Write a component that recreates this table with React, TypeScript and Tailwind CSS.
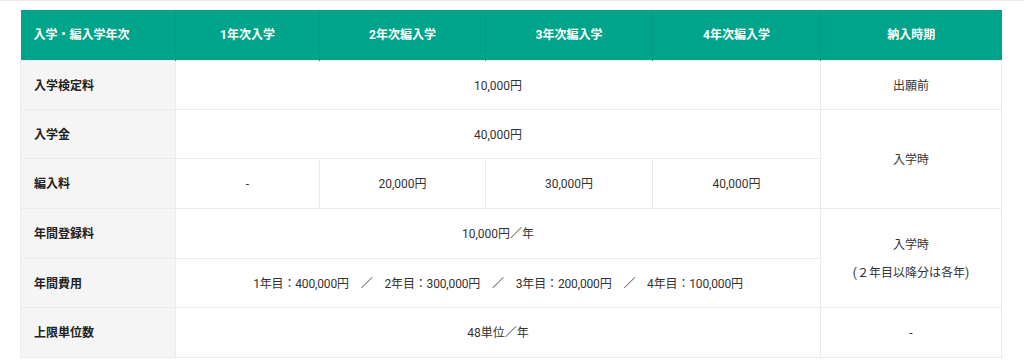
import React from "react";

const font = { fontFamily: 'Roboto, "Noto Sans CJK JP", sans-serif' };

const App: React.FC = () => {
  const th = "border-x border-[#079a80] font-bold text-white text-[12px] text-center";
  const td = "border border-[#ebebeb] text-center text-[12px] text-[#333] pt-[2px]";
  const label = "border border-[#ebebeb] bg-[#f5f5f5] text-left pl-[13px] pt-[2px] font-bold text-[12px] text-[#222]";

  return (
    <div className="w-[1024px] h-[364px] bg-white border-t border-[#e9e9e9] pt-[9px] pl-[20px]" style={font}>
      <table className="border-collapse table-fixed w-[981px]">
        <colgroup>
          <col className="w-[155px]" />
          <col className="w-[144px]" />
          <col className="w-[166px]" />
          <col className="w-[167px]" />
          <col className="w-[168px]" />
          <col className="w-[181px]" />
        </colgroup>
        <thead>
          <tr className="h-[50px] bg-[#00a48a] border-b border-[#7fcfc0]">
            <th className="border-r border-[#079a80] font-bold text-white text-[12px] text-left pl-[13px] pt-[1px]">入学・編入学年次</th>
            <th className={th}>1年次入学</th>
            <th className={th}>2年次編入学</th>
            <th className={th}>3年次編入学</th>
            <th className={th}>4年次編入学</th>
            <th className="border-l border-[#079a80] font-bold text-white text-[12px] text-center">納入時期</th>
          </tr>
        </thead>
        <tbody>
          <tr className="h-[49px]">
            <td className={label}>入学検定料</td>
            <td className={td} colSpan={4}>10,000円</td>
            <td className={td}>出願前</td>
          </tr>
          <tr className="h-[49px]">
            <td className={label}>入学金</td>
            <td className={td} colSpan={4}>40,000円</td>
            <td className={td} rowSpan={2}>入学時</td>
          </tr>
          <tr className="h-[50px]">
            <td className={label}>編入料</td>
            <td className={td}>-</td>
            <td className={td}>20,000円</td>
            <td className={td}>30,000円</td>
            <td className={td}>40,000円</td>
          </tr>
          <tr className="h-[50px]">
            <td className={label}>年間登録料</td>
            <td className={td} colSpan={4}>10,000円／年</td>
            <td className={`${td} leading-[28px]`} rowSpan={2}>
              入学時
              <br />
              (２年目以降分は各年)
            </td>
          </tr>
          <tr className="h-[49px]">
            <td className={label}>年間費用</td>
            <td className={`${td} tracking-[-0.15px]`} colSpan={4}>
              1年目：400,000円　／　2年目：300,000円　／　3年目：200,000円　／　4年目：100,000円
            </td>
          </tr>
          <tr className="h-[50px]">
            <td className={label}>上限単位数</td>
            <td className={td} colSpan={4}>48単位／年</td>
            <td className={td}>-</td>
          </tr>
        </tbody>
      </table>
    </div>
  );
};

export default App;
